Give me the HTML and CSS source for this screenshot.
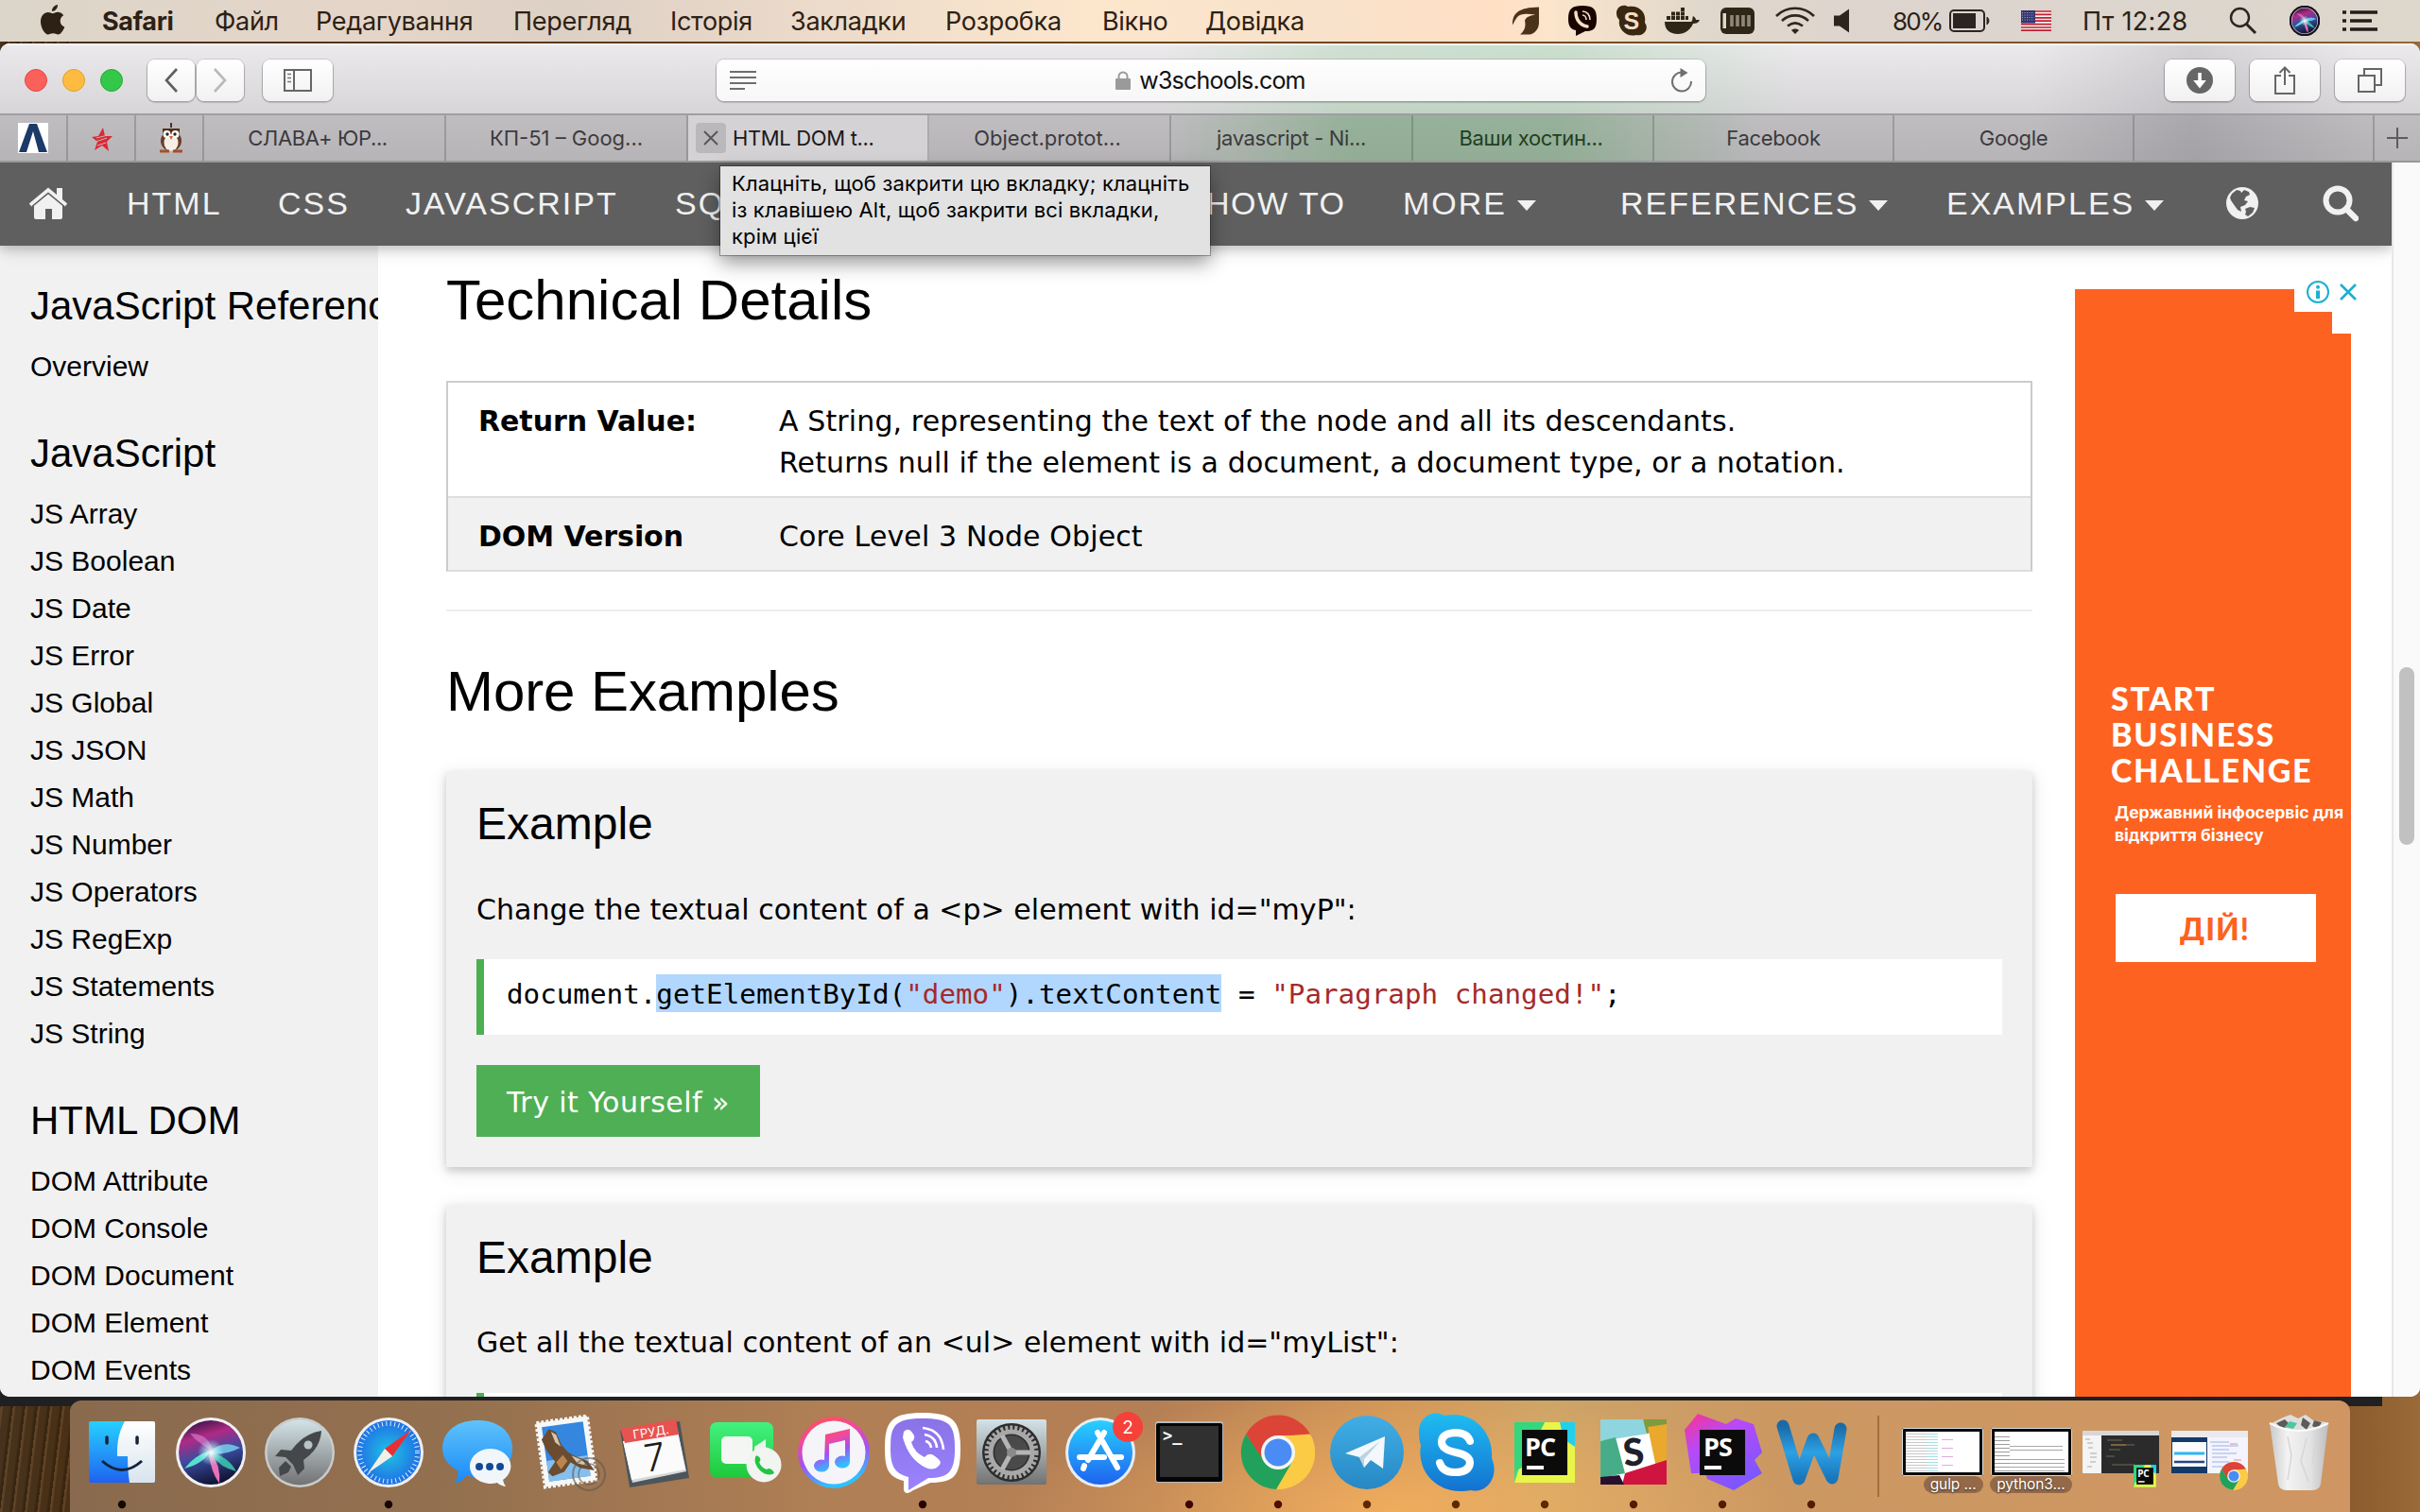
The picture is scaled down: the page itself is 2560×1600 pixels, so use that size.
FILE: index.html
```html
<!DOCTYPE html>
<html lang="uk">
<head>
<meta charset="utf-8">
<title>HTML DOM textContent Property</title>
<link rel="stylesheet" href="styles.css">
</head>
<body>
<svg class="defs" width="0" height="0">
  <defs>
    <linearGradient id="gBlue" x1="0" y1="0" x2="0" y2="1"><stop offset="0" stop-color="#27d0ff"/><stop offset="1" stop-color="#1f63f0"/></linearGradient>
    <linearGradient id="gSky" x1="0" y1="0" x2="0" y2="1"><stop offset="0" stop-color="#5fc3fb"/><stop offset="1" stop-color="#1a8afa"/></linearGradient>
    <linearGradient id="gWhite" x1="0" y1="0" x2="0" y2="1"><stop offset="0" stop-color="#fff"/><stop offset="1" stop-color="#d8e4ee"/></linearGradient>
    <linearGradient id="gGrey" x1="0" y1="0" x2="0" y2="1"><stop offset="0" stop-color="#d3e3e8"/><stop offset="1" stop-color="#727272"/></linearGradient>
    <linearGradient id="gGreen" x1="0" y1="0" x2="0" y2="1"><stop offset="0" stop-color="#42f27f"/><stop offset="1" stop-color="#1fc83a"/></linearGradient>
    <linearGradient id="gViolet" x1="0" y1="0" x2="0" y2="1"><stop offset="0" stop-color="#8a72e6"/><stop offset="1" stop-color="#9b83ff"/></linearGradient>
    <linearGradient id="gMusic" x1="0" y1="0" x2="0.3" y2="1"><stop offset="0" stop-color="#ff5347"/><stop offset=".35" stop-color="#f04a9d"/><stop offset=".65" stop-color="#a250f5"/><stop offset="1" stop-color="#2fc0ff"/></linearGradient>
    <linearGradient id="gTg" x1="0" y1="0" x2="0" y2="1"><stop offset="0" stop-color="#41aee6"/><stop offset="1" stop-color="#2688c4"/></linearGradient>
    <linearGradient id="gSk" x1="0" y1="0" x2="0" y2="1"><stop offset="0" stop-color="#1fbdf2"/><stop offset="1" stop-color="#1372d0"/></linearGradient>
    <linearGradient id="gPs" x1="0" y1="0" x2="0.6" y2="1"><stop offset="0" stop-color="#ff318c"/><stop offset=".4" stop-color="#b74af7"/><stop offset="1" stop-color="#7b57ff"/></linearGradient>
    <linearGradient id="gW" x1="0" y1="0" x2="0" y2="1"><stop offset="0" stop-color="#1b6aa5"/><stop offset=".5" stop-color="#2da0e4"/><stop offset="1" stop-color="#1876bb"/></linearGradient>
    <linearGradient id="gTrash" x1="0" y1="0" x2="1" y2="0"><stop offset="0" stop-color="#c9c9cb"/><stop offset=".3" stop-color="#f3f3f3"/><stop offset=".7" stop-color="#e2e2e2"/><stop offset="1" stop-color="#bdbdbf"/></linearGradient>
    <radialGradient id="gSafari"><stop offset="0" stop-color="#21c4e2"/><stop offset="1" stop-color="#1f6fe6"/></radialGradient>
    <linearGradient id="gSiri" x1="0.3" y1="0" x2="0.6" y2="1"><stop offset="0" stop-color="#3a1548"/><stop offset=".25" stop-color="#b02a85"/><stop offset=".55" stop-color="#3a4ca0"/><stop offset="1" stop-color="#0d0f2b"/></linearGradient>
    <radialGradient id="gGlow"><stop offset="0" stop-color="#fff"/><stop offset="1" stop-color="#9ff" stop-opacity="0"/></radialGradient>
    <g id="siri">
      <circle r="37" fill="#f0f0f2"/><circle r="34" fill="url(#gSiri)"/>
      <path d="M-22-20Q-2-20 2-2Q-12-8-22-20Z" fill="#d277c8" opacity=".7"/>
      <path d="M0-2Q14-14 31-5Q18 2 2 2Z" fill="#7fdff5" opacity=".75"/>
      <path d="M0 0Q18 4 27 20Q10 16 0 2Z" fill="#3fd6b0" opacity=".8"/>
      <path d="M0 0Q11 14 9 33Q0 20-2 2Z" fill="#ff7ac0" opacity=".9"/>
      <path d="M-28 17Q-16 2 0-2Q-8 12-28 17Z" fill="#5df0d6" opacity=".9"/>
      <circle r="14" fill="url(#gGlow)"/>
    </g>
    <g id="chrome">
      <circle r="39" fill="#fccb45"/>
      <path d="M-34-19.500A39 39 0 0 1 34-19.500L0-17L-17 9Z" fill="#db4437"/>
      <path d="M-34-19.500A39 39 0 0 0-2 39L15.500 9L-15 9Z" fill="#22a15c"/>
      <path d="M0-18H34.600A39 39 0 0 1-1 39L16 9Z" fill="#fccb45"/>
      <circle r="18" fill="#f4f6f4"/><circle r="14.500" fill="#4b8bf4"/>
    </g>
    <g id="pycharm">
      <rect x="-32" y="-32" width="64" height="64" fill="#3ddc84"/>
      <path d="M-5-32H18L32-8V32H-18L-32 32L-22 0Z" fill="#e9f549"/><path d="M16-32H32V-6L20-14Z" fill="#22d0ee"/><path d="M-32-32H0L-24 16L-32 20Z" fill="#35d67d"/>
      <rect x="-24" y="-24" width="48" height="48" fill="#0b0b0b"/>
      <rect x="-19" y="14" width="18" height="4" fill="#fff"/>
      <text class="ide" x="-21" y="4">PC</text>
    </g>
  </defs>
</svg>

<header class="menubar">
  <svg class="apple" width="26" height="32" viewBox="0 0 26 32"><path fill="#2c2114" d="M18 0c.4 3.600-2.600 7-6 7C11.600 3.600 14.800.4 18 0ZM12.700 9.200c1.500 0 3-1.400 5.500-1.400 2.300 0 4.700 1.200 6 3.400-5.200 3-4.300 10.300 1.100 12.300-1.700 4.600-4.500 8-6.800 8-2 0-2.900-1.200-5.300-1.200-2.500 0-3.500 1.200-5.400 1.200C4.600 31.500 0 24.500 0 18 0 11.600 4 8 7.700 8c2.200 0 3.800 1.200 5 1.200Z"/></svg>
  <b class="m-app">Safari</b><span>Файл</span><span>Редагування</span><span>Перегляд</span><span>Історія</span><span>Закладки</span><span>Розробка</span><span>Вікно</span><span>Довідка</span>
  <svg class="tray" width="362" height="44" viewBox="1598 0 362 44">
    <path fill="#4a3319" d="M1600 26c0-12 6-18 28-18.500V24c0 8-6 12-10 12.500h-10c6-5 6-10 5-15 2-4 6-5 11-6-6-1-12-1-15 0-5 2-6 6-9 11Z"/>
    <path fill="#1a0400" d="M1674 6c11 0 15 3 15 14s-4 13-12 13l-10 5v-6c-6-1-8-5-8-12 0-11 4-14 15-14Z"/>
    <path fill="none" stroke="#f5dfc4" stroke-width="3.500" stroke-linecap="round" d="M1667 13c0 8 5 14 12 15"/><path fill="none" stroke="#f5dfc4" stroke-width="1.600" d="M1674 12c5 0 8 4 8 9M1674 16c2 0 4 2 4 5"/>
    <path fill="#3a2710" d="M1710 14c0-8 8-10 12-7 12-2 20 6 18 17 5 6-1 15-9 13-10 3-20-6-18-16-2-2-3-4-3-7Z"/>
    <text class="tray-s" x="1717.500" y="31">S</text>
    <path fill="#2f2618" d="M1761 23h28c2-1 1-4 2-6 2 1 3 3 3 4h4c-1 3-4 4-7 4-3 7-9 11-16 11-9 0-14-5-14-13Z"/>
    <path fill="#2f2618" d="M1763 17h4v4h-4zM1768 17h4v4h-4zM1773 17h4v4h-4zM1778 17h4v4h-4zM1783 17h3v4h-3zM1768 12.500h4v4h-4zM1773 12.500h4v4h-4zM1778 12.500h4v4h-4zM1778 8h4v4h-4z"/>
    <rect x="1820" y="8" width="36" height="28" rx="6" fill="#2f2618"/><rect x="1822.500" y="14" width="3.500" height="16" fill="#e0d6ca"/>
    <path stroke="#8f867a" stroke-width="3.600" d="M1832 16v12M1838 16v12M1844 16v12M1850 16v12"/>
    <g fill="none" stroke="#2f261c" stroke-width="2.600"><path d="M1879 17c11-11 29-11 40 0M1885 22c8-7.500 20-7.500 28 0M1891 27.500c5-4 11-4 16 0"/></g><path fill="#2f261c" d="M1895 32c2-2 6-2 8 0l-4 4Z"/>
    <path fill="#2c241d" d="M1940 16.500h6l10-7v25l-10-7h-6Z"/>
  </svg>
  <span class="m-pct">80%</span>
  <svg class="m-batt" width="46" height="26" viewBox="0 0 46 26"><rect x="1" y="2" width="36" height="22" rx="4" fill="none" stroke="#2c2420" stroke-width="2"/><rect x="4" y="5" width="24" height="16" fill="#2c2420"/><path d="M40 9q4 4 0 8Z" fill="#2c2420" stroke="#2c2420"/></svg>
  <svg class="m-flag" width="32" height="22" viewBox="0 0 32 22"><rect width="32" height="22" fill="#f4f0ee"/><path stroke="#c01f30" stroke-width="1.700" d="M0 1h32M0 4.400h32M0 7.800h32M0 11.200h32M0 14.600h32M0 18h32M0 21.200h32"/><rect width="15" height="13.500" fill="#33356e"/><path stroke="#a9a8c6" stroke-dasharray="1 1.500" d="M1 2.500h13M1 5h13M1 7.500h13M1 10h13"/></svg>
  <span class="m-clock">Пт 12:28</span>
  <svg class="m-find" width="30" height="30" viewBox="0 0 30 30"><circle cx="11.500" cy="11.500" r="9.500" fill="none" stroke="#2c2420" stroke-width="2.400"/><path d="M18.500 18.500L28 28" stroke="#2c2420" stroke-width="3"/></svg>
  <svg class="m-siri" width="32" height="32" viewBox="-37 -37 74 74"><circle r="37" fill="#16121c"/><use href="#siri" transform="scale(.92)"/><circle r="35" fill="none" stroke="#16121c" stroke-width="5"/></svg>
  <svg class="m-list" width="38" height="22" viewBox="0 0 38 22"><path stroke="#241d18" stroke-width="3.400" d="M0 2h4M8 2h29M0 11h4M8 11h23M0 20h4M8 20h29"/></svg>
</header>

<div class="behind"></div>

<section class="window">
  <div class="toolbar">
    <div class="lights"><i class="red"></i><i class="yellow"></i><i class="green"></i></div>
    <div class="navbtns">
      <span class="btn b50"><svg width="16" height="26" viewBox="0 0 16 26"><path d="M14 1L3 13L14 25" fill="none" stroke="#5f5f5f" stroke-width="2.600"/></svg></span>
      <span class="btn b50"><svg width="16" height="26" viewBox="0 0 16 26"><path d="M2 1L13 13L2 25" fill="none" stroke="#b9b9b9" stroke-width="2.600"/></svg></span>
    </div>
    <span class="btn b74"><svg width="30" height="24" viewBox="0 0 30 24"><path d="M1 1h28v22h-28zM11 1v22" fill="none" stroke="#666" stroke-width="2"/><path d="M4 5.500h4M4 9.500h4M4 13.500h4" stroke="#777" stroke-width="1.600"/></svg></span>
    <div class="address">
      <svg width="28" height="22" viewBox="0 0 28 22"><path d="M0 2h28M0 8h28M0 14h28M0 20h16" stroke="#6e6e6e" stroke-width="2"/></svg>
      <span class="host"><svg width="16" height="20" viewBox="0 0 16 20"><rect y="8" width="16" height="12" rx="1" fill="#9a9a9a"/><path d="M3.500 9V6a4.500 4.500 0 0 1 9 0v3" fill="none" stroke="#9a9a9a" stroke-width="2"/></svg>w3schools.com</span>
      <svg width="24" height="26" viewBox="0 0 24 26"><path d="M12.500 4.500A10 10 0 1 0 22 14" fill="none" stroke="#6f6f6f" stroke-width="2"/><path d="M10.500 0L18.500 5L10.500 10Z" fill="#6f6f6f"/></svg>
    </div>
    <div class="right">
      <span class="btn b74"><svg width="28" height="28" viewBox="0 0 28 28"><circle cx="14" cy="14" r="14" fill="#666"/><path d="M12.200 6h3.600v8h5L14 22.500L7.200 14h5Z" fill="#fff"/></svg></span>
      <span class="btn b74"><svg width="24" height="30" viewBox="0 0 24 30"><path d="M8 10H2v19h20V10h-6M12 20V2M6.500 7L12 1.500L17.500 7" fill="none" stroke="#666" stroke-width="2"/></svg></span>
      <span class="btn b74"><svg width="26" height="26" viewBox="0 0 26 26"><path d="M1 8h17v17H1zM7 8V1h18v17h-7" fill="none" stroke="#666" stroke-width="2"/></svg></span>
    </div>
  </div>
  <div class="tabs">
    <span class="tab pin"><svg width="32" height="32" viewBox="0 0 32 32"><rect width="32" height="32" fill="#fff"/><path d="M12 1h8l11 30h-9L16 9L9 31H1Z" fill="#1c3a69"/></svg></span>
    <span class="tab pin"><svg class="star" width="22" height="32" viewBox="0 0 22 32"><path d="M12 5l2 9 8 0-6 6 2 10-7-6-8 5 3-9-6-5 7-1Z" fill="#d92b35"/><path d="M5 16l12-3M4 20l12-4M6 24l9-3" stroke="#c4b6ba" stroke-width="1"/></svg></span>
    <span class="tab pin"><svg class="owl" width="28" height="32" viewBox="0 0 28 32"><path d="M13 0h2v5h-2z" fill="#54301d"/><ellipse cx="14" cy="19" rx="11" ry="11" fill="#6a3f27"/><path d="M5 6h18v7H5z" fill="#54301d"/><ellipse cx="14" cy="21" rx="7.500" ry="9" fill="#f5efe7"/><circle cx="9.500" cy="12" r="4" fill="#fff"/><circle cx="18.500" cy="12" r="4" fill="#fff"/><circle cx="10" cy="12" r="1.700" fill="#222"/><circle cx="18" cy="12" r="1.700" fill="#222"/><path d="M12 14h4l-2 4Z" fill="#e85b28"/><path d="M2 30h10M16 30h10" stroke="#a2512a" stroke-width="3"/></svg></span>
    <span class="tab first">СЛАВА+ ЮР...</span>
    <span class="tab wide">КП-51 – Goog...</span>
    <span class="tab active"><i class="close"><svg width="16" height="16" viewBox="0 0 16 16"><path d="M1 1L15 15M15 1L1 15" stroke="#555" stroke-width="1.800"/></svg></i>HTML DOM t...</span>
    <span class="tab wide object">Object.protot...</span>
    <span class="tab">javascript - Ni...</span>
    <span class="tab dark">Ваши хостин...</span>
    <span class="tab">Facebook</span>
    <span class="tab">Google</span>
    <span class="tab"></span>
    <span class="tab plus"><svg width="22" height="22" viewBox="0 0 22 22"><path d="M11 0v22M0 11h22" stroke="#5c5c5c" stroke-width="2"/></svg></span>
  </div>

  <div class="page">
    <div class="viewport">
      <nav class="topnav">
        <svg width="40" height="34" viewBox="0 0 40 34"><path fill="#f1f1f1" d="M20 6L35 19V32a2 2 0 0 1-2 2H24V23H17V34H7a2 2 0 0 1-2-2V19Z"/><path d="M1 19L20 3L39 19" fill="none" stroke="#f1f1f1" stroke-width="4"/><path d="M3 20.500L20 6.500L37 20.500" fill="none" stroke="#5f5f5f" stroke-width="1.500"/><path d="M29 1h6v14l-6-5Z" fill="#f1f1f1"/></svg>
        <span>HTML</span><span>CSS</span><span>JAVASCRIPT</span><span>SQL</span><span class="howto">HOW TO</span><span>MORE<i></i></span><span>REFERENCES<i></i></span><span>EXAMPLES<i></i></span>
        <svg class="globe" width="36" height="36" viewBox="0 0 36 36"><circle cx="18" cy="18" r="17" fill="#f1f1f1"/><path fill="#5f5f5f" d="M7 8l5-4 4 1 1 2 3-3 5 2 1 3-4 2-2 4 4 1-3 4-5 2 1 5-4-2-5-7-2-3-1-3ZM21 24l5-2 5 1-2 5-5 4-3-2 1-3Z"/></svg>
        <svg class="search" width="38" height="40" viewBox="0 0 38 40"><circle cx="16" cy="17" r="12.500" fill="none" stroke="#f1f1f1" stroke-width="6"/><path d="M25 26L35 36" stroke="#f1f1f1" stroke-width="6.500" stroke-linecap="round"/></svg>
      </nav>
      <div class="columns">
        <aside class="side">
          <h2>JavaScript Reference</h2>
          <a>Overview</a>
          <h2>JavaScript</h2>
          <a>JS Array</a><a>JS Boolean</a><a>JS Date</a><a>JS Error</a><a>JS Global</a><a>JS JSON</a><a>JS Math</a><a>JS Number</a><a>JS Operators</a><a>JS RegExp</a><a>JS Statements</a><a>JS String</a>
          <h2>HTML DOM</h2>
          <a>DOM Attribute</a><a>DOM Console</a><a>DOM Document</a><a>DOM Element</a><a>DOM Events</a>
        </aside>
        <main class="main">
          <h2>Technical Details</h2>
          <div class="details">
            <div class="row"><b>Return Value:</b><span>A String, representing the text of the node and all its descendants.<br>Returns null if the element is a document, a document type, or a notation.</span></div>
            <div class="row alt"><b>DOM Version</b><span>Core Level 3 Node Object</span></div>
          </div>
          <hr>
          <h2 class="more">More Examples</h2>
          <div class="card lead">
            <h3>Example</h3>
            <p>Change the textual content of a &lt;p&gt; element with id="myP":</p>
            <div class="code">document.<mark>getElementById(<em>"demo"</em>).textContent</mark> = <em>"Paragraph changed!"</em>;</div>
            <a class="try">Try it Yourself »</a>
          </div>
          <div class="card">
            <h3>Example</h3>
            <p>Get all the textual content of an &lt;ul&gt; element with id="myList":</p>
            <div class="code"></div>
          </div>
        </main>
        <aside class="ad">
          <div class="creative">
            <div class="slogan">START<br>BUSINESS<br>CHALLENGE</div>
            <div class="sub">Державний інфосервіс для<br>відкриття бізнесу</div>
            <div class="cta">ДІЙ!</div>
          </div>
          <svg class="choices" width="56" height="24" viewBox="0 0 56 24"><circle cx="12" cy="12" r="11" fill="none" stroke="#1cb0d0" stroke-width="2"/><circle cx="12" cy="6.700" r="2" fill="#1cb0d0"/><path d="M12 10.500v8.500" stroke="#1cb0d0" stroke-width="4"/><path d="M36 4L52 20M52 4L36 20" stroke="#1cb0d0" stroke-width="2.600"/></svg>
        </aside>
      </div>
    </div>
    <div class="scroll"><i></i></div>
  </div>
</section>

<div class="tip">Клацніть, щоб закрити цю вкладку; клацніть<br>із клавішею Alt, щоб закрити всі вкладки,<br>крім цієї</div>

<footer class="dock">
  <svg class="app" viewBox="-47 -55 94 118"><rect x="-35" y="-33" width="70" height="65" rx="2" fill="url(#gBlue)"/><path d="M3-33H33a2 2 0 0 1 2 2V30a2 2 0 0 1-2 2H8Q6 20 6 4H-5Q-6-18 3-33Z" fill="url(#gWhite)"/><path d="M-16-16v6M16-16v6" stroke="#13233c" stroke-width="3.500" stroke-linecap="round"/><path d="M-21 9Q0 28 21 9" fill="none" stroke="#13233c" stroke-width="3"/><circle cy="55" r="4.200" fill="#120a04"/></svg>
  <svg class="app" viewBox="-47 -55 94 118"><use href="#siri"/></svg>
  <svg class="app" viewBox="-47 -55 94 118"><circle r="37" fill="#c9cccd"/><circle r="34.500" fill="url(#gGrey)"/><path d="M23-23Q4-20-9-2L-20-3L-26 4L-15 5L-7 13L-2 24L5 17L4 8Q22-4 23-23ZM-15 9L-22 16L-21 25L-12 21L-9 15Z" fill="#45484a"/><circle cx="9" cy="-8" r="4.500" fill="#b9c4c8"/></svg>
  <svg class="app" viewBox="-47 -55 94 118"><circle r="37" fill="#eef0f2"/><circle r="34" fill="url(#gSafari)"/><circle r="30.500" fill="none" stroke="#d7f1fb" stroke-width="5" stroke-dasharray="1 3.400"/><path d="M24-24L4 4L-4-4Z" fill="#ea2f32"/><path d="M-22 22L4 4L-4-4Z" fill="#f2efe8"/><circle cy="55" r="4.200" fill="#180400"/></svg>
  <svg class="app" viewBox="-47 -55 94 118"><path d="M0-34C22-34 37-22 37-4S22 27 0 26Q-8 26-12 24Q-16 32-24 32Q-20 27-21 19Q-37 10-37-4C-37-22-22-34 0-34Z" fill="url(#gSky)"/><path d="M13-4a22 18.500 0 0 1 14 33q1 5 3 7q-6-1-9-4a22 18.500 0 1 1-8-36Z" fill="#f1f6fa"/><g fill="#124a96"><circle cx="2" cy="15" r="4"/><circle cx="13" cy="15" r="4"/><circle cx="24" cy="15" r="4"/></g></svg>
  <svg class="app" viewBox="-47 -55 94 118"><g transform="rotate(-8)"><rect x="-27" y="-35" width="54" height="68" fill="#f6f7f7" stroke="#f6f7f7" stroke-width="4" stroke-dasharray="3 2"/><rect x="-22" y="-30" width="44" height="58" fill="#3486df"/><path d="M-22 6h44v22h-44Z" fill="#86bfeb"/><path d="M-15-27l7 4 4 14 6 9 5 4 14 8 6 11-15-5-9-7-8 9-13 3-4-5 9-10-7-12-4-13Z" fill="#6b4c30"/><path d="M-13-24l5 4 3 13-5-5ZM5 4l10 6 5 7-10-4Z" fill="#d6c6ae"/><path d="M-12 9l8-7 4 7-8 8Z" fill="#b98650"/></g><circle cx="24" cy="23" r="17" fill="none" stroke="#61584f" stroke-width="2" opacity=".6"/><circle cx="24" cy="23" r="11" fill="none" stroke="#61584f" stroke-width="1.500" opacity=".6"/></svg>
  <svg class="app" viewBox="-47 -55 94 118"><path d="M-37-23L26-33L36 27L-27 37Z" fill="#4c555c"/><path d="M-34-12L24-22L33 20L-24 32Z" fill="#d8d8d8"/><path d="M-34-12L24-22L32 18L-25 29Z" fill="#fbfbfb"/><path d="M-37-25L22-35L25-19L-32-10Z" fill="#e8524f"/><g transform="rotate(-9)"><text class="cal-m" x="-1" y="-17.500">ГРУД.</text><text class="cal-d" x="-1" y="19">7</text></g></svg>
  <svg class="app" viewBox="-47 -55 94 118"><rect x="-37" y="-32" width="67" height="59" rx="7" fill="url(#gGreen)"/><rect x="-25" y="-17" width="33" height="29" rx="5" fill="#f3f6f3"/><path d="M10-6L22-14V6H10Z" fill="#e8f3ea"/><circle cx="20" cy="13" r="18.500" fill="#f2f4f2"/><path d="M11 5q1-4 5 1q1 3-1 4q2 6 8 8q2-2 5 0q5 4 1 5q-8 2-14-5q-6-7-4-13Z" fill="#20c542"/></svg>
  <svg class="app" viewBox="-47 -55 94 118"><circle r="38" fill="url(#gMusic)"/><circle r="33.500" fill="#f5f4f9"/><path d="M-9-19L17-25V10a8 6.500 0 1 1-5-6V-13L-5-9V14a8 6.500 0 1 1-5-6Z" fill="url(#gMusic)"/></svg>
  <svg class="app" viewBox="-47 -55 94 118"><path d="M0-42C34-42 40-32 40-4C40 24 34 32 8 32L-10 40Q-18 46-20 40V30C-36 26-40 18-40-4C-40-32-34-42 0-42Z" fill="#fff"/><path d="M0-36C30-36 34-28 34-4C34 20 28 27 6 27L-15 40V26C-30 22-34 14-34-4C-34-28-30-36 0-36Z" fill="url(#gViolet)"/><path d="M-20-22q5-5 9 1q5 6-1 10q3 11 14 16q5-6 11-1q9 6 4 10q-5 6-14 2q-18-9-24-32Z" fill="#fff"/><path d="M0-26Q20-24 22-3M2-19Q14-17 15-5M3-12Q8-11 9-5" fill="none" stroke="#fff" stroke-width="2.600"/><circle cy="55" r="4.200" fill="#2a0300"/></svg>
  <svg class="app" viewBox="-47 -55 94 118"><rect x="-37" y="-35" width="74" height="69" rx="2" fill="url(#gGrey)"/><circle r="31" fill="#2d2d2d"/><circle r="26" fill="none" stroke="#a8a8a8" stroke-width="5" stroke-dasharray="3 2"/><circle r="22" fill="none" stroke="#a8a8a8" stroke-width="5"/><circle r="18" fill="#4a4a4a"/><path d="M-10-18L0 0L20 0M0 0L-10 18" fill="none" stroke="#b5b5b5" stroke-width="5"/><circle r="5" fill="#8a8a8a"/></svg>
  <svg class="app" viewBox="-47 -55 94 118"><circle r="37" fill="#e9edf1"/><circle r="34" fill="url(#gBlue)"/><path d="M4-21L-13 8M-17 14L-18 17M-3-21L18 16M-22 5H4M15 5H22" stroke="#fff" stroke-width="6" stroke-linecap="round"/><circle cx="29" cy="-27" r="16" fill="#f6413b"/><text class="badge" x="29" y="-20">2</text></svg>
  <svg class="app" viewBox="-47 -55 94 118"><rect x="-36" y="-33" width="72" height="65" rx="3" fill="#b6bcc0"/><rect x="-35" y="-31" width="70" height="62" rx="2" fill="#050505"/><rect x="-31" y="-28" width="62" height="54" fill="#303031"/><text class="prompt" x="-28" y="-12">&gt;_</text><circle cy="55" r="4.200" fill="#3d0300"/></svg>
  <svg class="app" viewBox="-47 -55 94 118"><use href="#chrome"/><circle cy="55" r="4.200" fill="#4d0f00"/></svg>
  <svg class="app" viewBox="-47 -55 94 118"><circle r="39" fill="url(#gTg)"/><path d="M-23 1L19-17L17 17L4 8L-3 16L-8 5Z" fill="#f3f8fc"/><path d="M-8 5L14-12L-3 7V16Z" fill="#b9d2e4"/><circle cy="55" r="4.200" fill="#5d2a00"/></svg>
  <svg class="app" viewBox="-47 -55 94 118"><path d="M-39-20C-40-38-24-46-12-39C18-45 40-22 38 6C46 24 34 44 16 40C-18 46-42 22-37-8Q-39-13-39-20Z" fill="url(#gSk)"/><path d="M15-12Q12-21-1-21Q-15-20-15-11Q-15-3 0 0Q15 3 15 11Q14 21-1 21Q-14 21-17 11" fill="none" stroke="#fff" stroke-width="8" stroke-linecap="round"/><circle cy="55" r="4.200" fill="#5d2a00"/></svg>
  <svg class="app" viewBox="-47 -55 94 118"><use href="#pycharm"/><circle cy="55" r="4.200" fill="#5d2a00"/></svg>
  <svg class="app" viewBox="-47 -55 94 118"><rect x="-35" y="-35" width="70" height="69" rx="3" fill="#fff"/><path d="M-35-32Q-35-35-32-35H10L16-20L-35-12Z" fill="#8ed5df"/><path d="M10-35H35V-28L14-20Z" fill="#7f9b3c"/><path d="M15-27L35-30V12L24 16Z" fill="#eaa82d"/><path d="M-35-12L-19-16L-9 22L-35 27Z" fill="#46ad88"/><path d="M-9 22L35 8V34H-12Z" fill="#cf1440"/><path d="M-35 26L-15 24L-10 34H-35Z" fill="#28112f"/><text class="slack" x="0" y="14" transform="rotate(-6)">S</text><circle cy="55" r="4.200" fill="#521c00"/></svg>
  <svg class="app" viewBox="-47 -55 94 118"><path d="M-26-41L4-30L14-36L33-30L42 0L34 8L42 22L12 40L-16 28L-18 22L-33 22L-40-24Z" fill="url(#gPs)"/><rect x="-24" y="-24" width="48" height="48" fill="#0b0b0b"/><rect x="-19" y="14" width="18" height="4" fill="#fff"/><text class="ide" x="-20" y="4">PS</text><circle cy="55" r="4.200" fill="#521c00"/></svg>
  <svg class="app" viewBox="-47 -55 94 118"><path d="M31-25L22 27L2-14L-13 28L-30-28" fill="none" stroke="url(#gW)" stroke-width="13" stroke-linecap="round" stroke-linejoin="round"/><circle cy="55" r="4.200" fill="#521c00"/></svg>
  <i class="sep"></i>
  <div class="mini term"><div class="shot lines"></div><span>gulp ...</span></div>
  <div class="mini term"><div class="shot mono"></div><span>python3...</span></div>
  <svg class="mini" width="82" height="62" viewBox="0 0 82 62"><rect width="81" height="45" fill="#d7d7d7"/><rect y="5" width="20" height="40" fill="#f4f4f4"/><rect x="20" y="5" width="61" height="40" fill="#2b2b2b"/><path d="M3 9h5M5 13h6M6 18h5M8 24h7M8 28h7M8 33h6M5 38h5" stroke="#aaa"/><path d="M26 10h16M30 15h25M28 20h12M25 27h9M31 36h24" stroke="#6b6b5b"/><path d="M30 15h16" stroke="#b07a3c"/><use href="#pycharm" transform="translate(66 48) scale(.37)"/></svg>
  <svg class="mini" width="82" height="64" viewBox="0 0 82 64"><rect width="81" height="45" fill="#e9e9ee"/><rect y="7" width="38" height="38" fill="#123a68"/><rect x="1" y="12" width="36" height="26" fill="#fbfbfb"/><path d="M3 24h32" stroke="#2fb4f5" stroke-width="3"/><path d="M3 33h32" stroke="#27467f" stroke-width="2.500"/><rect x="38" y="7" width="43" height="38" fill="#f3f4fd"/><path d="M41 12h20M43 16h28M43 20h18M43 24h26M43 28h16M43 33h18M43 38h12" stroke="#9fb0e6"/><path d="M62 14h8M66 31h8" stroke="#e08aa0"/><use href="#chrome" transform="translate(66 48) scale(.38)"/></svg>
  <svg class="trash" width="64" height="82" viewBox="0 0 64 82"><path d="M3 10l12-6 8-3 8 4 8-4 8 6 14 2-3 10H6Z" fill="#dedede"/><path d="M8 10l9-4 6 6-9 4ZM36 4l8 6-4 7-6-5ZM48 7l8 2-4 7-6-3Z" fill="#5e5a58"/><path d="M22 8l8 2-4 6-9-2Z" fill="#4cc7a2"/><path d="M1 10Q32 26 63 10L55 74Q54 81 46 81H19Q11 81 10 74Z" fill="url(#gTrash)"/><path d="M1 10Q32 26 63 10" fill="none" stroke="#fafafa" stroke-width="2"/><path d="M20 24l4 20-4 26M40 26l-6 24 8 22M50 24l-4 30" fill="none" stroke="#d6d6d6" stroke-width="1.500"/></svg>
</footer>
</body>
</html>
```
FILE: styles.css
```css
* { box-sizing: border-box; }

body {
  margin: 0;
  width: 2560px;
  height: 1600px;
  overflow: hidden;
  position: relative;
  display: flex;
  flex-direction: column;
  font-family: Inter, "Liberation Sans", sans-serif;
  background:
    repeating-linear-gradient(97deg, rgba(160, 120, 70, 0.25) 0 2px, transparent 3px 9px, rgba(20, 8, 0, 0.3) 11px 13px) 0 0 / 74px 100% no-repeat,
    linear-gradient(90deg, #46321c 0, #4a3015 80px, #6d431c 1200px, #8a5a2c 2480px, #9a6a38 2560px);
}

.defs { position: absolute; }
svg { display: block; flex: none; }
i { font-style: normal; }

/* Menu bar */
.menubar {
  height: 44px;
  flex: none;
  display: grid;
  grid-template-columns: 65px 119px 107px 209px 166px 127px 164px 166px 109px 323px 404px 60px 76px 66px 155px 63px 56px 1fr;
  align-items: center;
  padding-left: 43px;
  font-size: 27px;
  letter-spacing: -0.3px;
  white-space: nowrap;
  color: #2c2114;
  background: linear-gradient(90deg, #dcd5c9 0, #e5d5c8 400px, #ddd0c5 600px, #eedccb 900px, #fce6cc 1150px, #f8e2cb 1400px, #ffe0c5 1580px, #fbe5cb 1640px, #e0d8cc 1800px, #dcd4ce 2050px, #ddd7cc 2560px);
}
.apple { margin-top: -3px; }
.m-app { font-weight: 700; letter-spacing: -0.4px; }
.m-pct { font-size: 26px; letter-spacing: -1.9px; }
.m-clock { letter-spacing: 0.3px; margin-left: -1px; }
.m-find { margin-left: -1px; }
.tray { height: 44px; }
.tray-s { font: bold 25px "Liberation Sans", sans-serif; fill: #f3dfc5; }

.behind {
  position: absolute;
  left: 0;
  top: 1460px;
  width: 2520px;
  height: 28px;
  background: #1f2022;
}

/* Browser window */
.window {
  position: relative;
  height: 1432px;
  margin-top: 2px;
  flex: none;
  display: flex;
  flex-direction: column;
  border-radius: 10px;
  overflow: hidden;
  background: #fff;
}
.toolbar {
  height: 74px;
  flex: none;
  display: flex;
  align-items: center;
  padding: 2px 16px 0 26px;
  border-top: 2px solid #f8f7f8;
  background:
    linear-gradient(90deg, transparent 1230px, rgba(165, 210, 172, 0.4) 1420px, rgba(165, 210, 172, 0.45) 1660px, transparent 1900px),
    linear-gradient(90deg, transparent 2150px, rgba(120, 115, 125, 0.2) 2320px, transparent 2500px),
    linear-gradient(#ebe9eb, #d7d5d8);
}
.lights { display: flex; gap: 16px; width: 130px; }
.lights i { width: 24px; height: 24px; border-radius: 50%; }
.red { background: #fc605b; border: 1px solid #df4743; }
.yellow { background: #fdbc40; border: 1px solid #dd9e32; }
.green { background: #34c84a; border: 1px solid #27a935; }
.navbtns { display: flex; gap: 2px; margin-right: 20px; }
.btn {
  height: 44px;
  display: flex;
  align-items: center;
  justify-content: center;
  border-radius: 8px;
  background: linear-gradient(#fff, #f1f1f1);
  box-shadow: 0 0 0 1px rgba(0, 0, 0, 0.1), 0 1px 1px 1px rgba(0, 0, 0, 0.16);
}
.b50 { width: 50px; }
.b74 { width: 74px; }
.address {
  width: 1046px;
  height: 44px;
  margin-left: 406px;
  display: flex;
  align-items: center;
  justify-content: space-between;
  padding: 0 13px 0 14px;
  border-radius: 8px;
  background: linear-gradient(rgba(255, 255, 255, 0.97), rgba(247, 248, 247, 0.97));
  box-shadow: 0 0 0 1px rgba(0, 0, 0, 0.1), 0 1px 1px 1px rgba(0, 0, 0, 0.16);
}
.host { display: flex; align-items: center; gap: 9px; margin-right: 6px; font-size: 25px; letter-spacing: -0.8px; color: #111; }
.right { display: flex; gap: 16px; margin-left: auto; }

.tabs {
  height: 52px;
  flex: none;
  display: grid;
  grid-template-columns: 72px 72px 72px 256px 256px 255px 256px 256px 255px 254px 254px 254px 1fr;
  border-top: 2px solid #a09ea2;
  border-bottom: 2px solid #999799;
  background:
    linear-gradient(90deg, transparent 1230px, rgba(110, 165, 115, 0.5) 1430px, rgba(110, 165, 115, 0.5) 1650px, transparent 1860px),
    linear-gradient(90deg, transparent 2150px, rgba(90, 85, 95, 0.2) 2320px, transparent 2520px),
    linear-gradient(#bfbdc0, #b6b4b7);
}
.tab {
  display: flex;
  align-items: center;
  justify-content: center;
  border-right: 2px solid rgba(80, 80, 84, 0.3);
  font-size: 22px;
  letter-spacing: -0.35px;
  white-space: nowrap;
  color: #3c3a3e;
}
.first { padding-right: 14px; }
.wide { letter-spacing: 0; }
.object { padding-right: 4px; }
.star { margin-left: 2px; }
.owl { margin-left: 4px; }
.plus { border-right: 0; }
.dark { color: #20401f; padding-right: 4px; }
.active {
  justify-content: flex-start;
  padding-left: 8px;
  gap: 7px;
  color: #1a191b;
  background: #d4d2d5;
}
.close {
  width: 32px;
  height: 32px;
  display: flex;
  align-items: center;
  justify-content: center;
  border-radius: 4px;
  background: #bab8bb;
}

/* Web page */
.page { flex: 1; min-height: 0; display: flex; }
.viewport { width: 2530px; display: flex; flex-direction: column; overflow: hidden; }
.scroll {
  flex: 1;
  border-left: 2px solid #e7e7e7;
  background: #fafafa;
  padding: 534px 0 0 6px;
}
.scroll i { display: block; width: 16px; height: 188px; border-radius: 8px; background: #c1c1c1; }

.topnav {
  position: relative;
  height: 88px;
  flex: none;
  display: grid;
  grid-template-columns: 103px 160px 135px 285px 562px 208px 230px 345px 295px 103px 1fr;
  align-items: center;
  padding: 0 0 2px 31px;
  font: 34px "Liberation Sans", sans-serif;
  letter-spacing: 2px;
  color: #f1f1f1;
  background: #5f5f5f;
  box-shadow: 0 4px 10px rgba(0, 0, 0, 0.16), 0 4px 20px rgba(0, 0, 0, 0.12);
}
.howto { letter-spacing: 1.500px; }
.topnav i {
  display: inline-block;
  margin-left: 11px;
  vertical-align: 4px;
  border: 10px solid transparent;
  border-top: 11px solid #f1f1f1;
  border-bottom: 0;
}

.columns { flex: 1; min-height: 0; display: flex; }
.side {
  width: 400px;
  flex: none;
  overflow: hidden;
  padding: 25px 0 0 32px;
  background: #f1f1f1;
  font-family: "Liberation Sans", sans-serif;
  white-space: nowrap;
  color: #000;
}
.side h2 { margin: 0; height: 78px; font-size: 42px; line-height: 78px; font-weight: 400; }
.side a + h2 { margin-top: 28px; }
.side a { display: block; height: 50px; font-size: 30px; line-height: 50px; }

.main {
  width: 1750px;
  flex: none;
  padding: 13px 0 0 72px;
  font: 30px/45px "DejaVu Sans", sans-serif;
  letter-spacing: 0.120px;
  color: #000;
}
.main h2 { margin: 0 0 40px; font: 400 60px/90px "Liberation Sans", sans-serif; letter-spacing: 0; }
.details { border: 2px solid #ccc; border-bottom-color: #ddd; height: 202px; }
.row { display: flex; height: 122px; padding: 19px 0 0 32px; border-bottom: 2px solid #ddd; line-height: 44px; }
.row b { width: 318px; letter-spacing: -0.05px; }
.alt { height: 76px; background: #f1f1f1; border: 0; }
hr { height: 2px; margin: 40px 0; border: 0; background: #eee; }
.main .more { margin-bottom: 39px; letter-spacing: -0.08px; }
.card {
  height: 419px;
  margin-bottom: 40px;
  padding: 20px 32px 0;
  background: #f1f1f1;
  box-shadow: 0 4px 8px rgba(0, 0, 0, 0.16), 0 4px 20px rgba(0, 0, 0, 0.1);
}
.card h3 { margin: 0; font: 400 48px/72px "Liberation Sans", sans-serif; letter-spacing: 0; }
.card p { margin: 31px 0; letter-spacing: 0.030px; }
.lead p { margin: 32px 0 30px; }
.code {
  height: 80px;
  padding: 16px 24px 0;
  border-left: 8px solid #4caf50;
  background: #fff;
  font: 29.220px/40px "DejaVu Sans Mono", monospace;
  letter-spacing: 0;
  white-space: pre;
}
.code em { font-style: normal; color: #a52a2a; }
.code mark { display: inline-block; height: 40px; line-height: 43px; vertical-align: baseline; background: #b2d7fe; color: inherit; }
.try {
  display: inline-flex;
  align-items: center;
  width: 300px;
  height: 76px;
  margin-top: 32px;
  padding: 2px 0 0 32px;
  letter-spacing: 0.450px;
  color: #fff;
  background: #4faf55;
}

.ad { position: relative; flex: 1; padding: 46px 0 0 45px; }
.creative {
  width: 292px;
  height: 1300px;
  padding: 414px 0 0 38px;
  color: #fff;
  background: #fd6220;
  clip-path: polygon(0 0, 232px 0, 232px 24px, 272px 24px, 272px 47px, 292px 47px, 292px 100%, 0 100%);
}
.slogan { font: 900 34px/38px Lato, sans-serif; letter-spacing: 1.700px; }
.sub { margin: 14px 0 0 4px; font: 700 17.500px/24px Inter, sans-serif; letter-spacing: 0; white-space: nowrap; }
.cta {
  width: 212px;
  height: 72px;
  margin: 50px 0 0 5px;
  padding-right: 2px;
  display: flex;
  align-items: center;
  justify-content: center;
  font: 900 32px Lato, "Open Sans", sans-serif;
  letter-spacing: 1px;
  color: #fd6220;
  background: #fff;
}
.choices { position: absolute; left: 290px; top: 37px; }

/* Tooltip */
.tip {
  position: absolute;
  left: 762px;
  top: 176px;
  width: 518px;
  height: 94px;
  padding: 4px 0 0 12px;
  font-size: 22px;
  line-height: 28px;
  letter-spacing: 0.150px;
  white-space: nowrap;
  color: #000;
  background: #e2e2e2;
  box-shadow: 0 0 0 1px rgba(0, 0, 0, 0.3), 0 8px 20px rgba(0, 0, 0, 0.4);
}

/* Dock */
.dock {
  position: relative;
  width: 2412px;
  height: 118px;
  margin: 4px 0 0 74px;
  padding-left: 8px;
  flex: none;
  display: flex;
  border-radius: 12px 12px 0 0;
  background:
    radial-gradient(ellipse 420px 130px at 1400px 118px, rgba(250, 180, 95, 0.75), transparent),
    linear-gradient(90deg, #8a6a4e 0, #93704f 400px, #b07f55 800px, #b57f55 1150px, #d09558 1400px, #cda468 1560px, #cc9862 1800px, #cf9663 2412px);
}
.app { width: 94.090px; height: 118px; }
.sep { width: 2px; height: 86px; margin: 16px 24px 0 22px; background: #a56e3c; }
.mini { flex: none; margin: 32px 12px 0 0; }
.term { width: 86px; margin: 29px 8px 0 0; display: flex; flex-direction: column; align-items: flex-end; }
.term:last-of-type { margin-right: 11px; }
.shot { width: 86px; height: 51px; border: 4px solid #0b0b0b; outline: 1px solid #d8dcdc; outline-offset: -1px; border-radius: 2px; }
.lines { background: repeating-linear-gradient(#fff 0 2px, #c8c8c8 2px 3px) 0 0 / 22px 100% no-repeat, repeating-linear-gradient(#fff 0 2px, #a9dde2 2px 3px) 22px 0 / 12px 100% no-repeat, repeating-linear-gradient(#fff 0 8px, #e6a6e6 8px 9px) 38px 0 / 12px 100% no-repeat, #fff; }
.mono { background: repeating-linear-gradient(#fff 0 3px, #9c9c9c 3px 4px) 0 2px / 16px 40px no-repeat, repeating-linear-gradient(#fff 0 3px, #a8a8a8 3px 4px) 16px 12px / 56px 8px no-repeat, repeating-linear-gradient(#fff 0 3px, #a8a8a8 3px 4px) 16px 26px / 58px 16px no-repeat, #fff; }
.term span {
  height: 18px;
  padding: 0 7px;
  border-radius: 9px;
  font-size: 15.500px;
  line-height: 17px;
  letter-spacing: -0.1px;
  white-space: nowrap;
  color: #fff;
  background: #93694a;
  text-shadow: 0 1px 2px #3a2412;
}
.trash { margin: 14px 0 0 9px; }

.ide { font: bold 27px "Open Sans", sans-serif; fill: #fff; letter-spacing: -1px; }
.cal-m { font: 13px Inter, sans-serif; fill: #fff; text-anchor: middle; }
.cal-d { font: 300 40px Inter, sans-serif; fill: #1c1c1c; text-anchor: middle; }
.badge { font: 19px Inter, sans-serif; fill: #fff; text-anchor: middle; }
.prompt { font: bold 17px "DejaVu Sans Mono", monospace; fill: #fff; }
.slack { font: 900 40px Lato, sans-serif; fill: #20202c; text-anchor: middle; }
```
